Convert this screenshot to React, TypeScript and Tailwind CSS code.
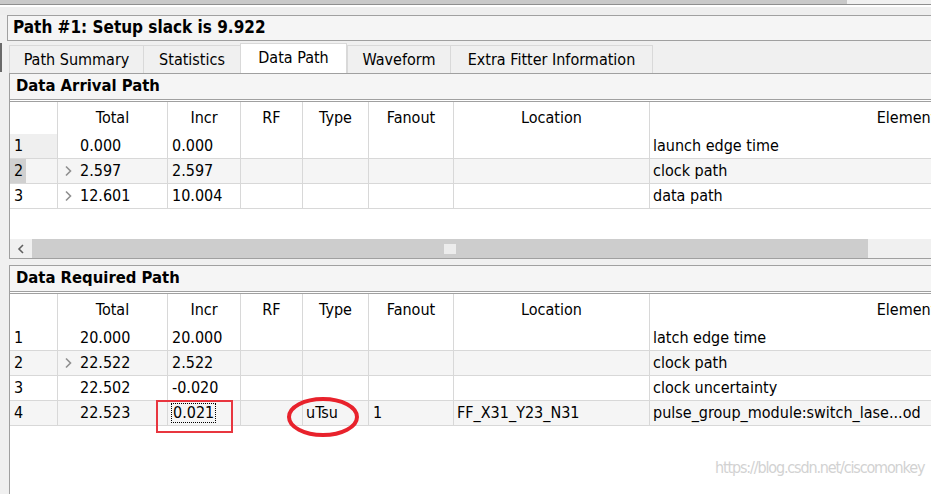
const FONT = '"DejaVu Sans Condensed", "DejaVu Sans", Tahoma, sans-serif';

type Row = {
  n: string;
  total: string;
  incr: string;
  type?: string;
  fanout?: string;
  location?: string;
  element: string;
  arrow?: boolean;
  focus?: boolean;
};

const arrival: Row[] = [
  { n: "1", total: "0.000", incr: "0.000", element: "launch edge time" },
  { n: "2", total: "2.597", incr: "2.597", element: "clock path", arrow: true },
  { n: "3", total: "12.601", incr: "10.004", element: "data path", arrow: true },
];

const required: Row[] = [
  { n: "1", total: "20.000", incr: "20.000", element: "latch edge time" },
  { n: "2", total: "22.522", incr: "2.522", element: "clock path", arrow: true },
  { n: "3", total: "22.502", incr: "-0.020", element: "clock uncertainty" },
  {
    n: "4",
    total: "22.523",
    incr: "0.021",
    type: "uTsu",
    fanout: "1",
    location: "FF_X31_Y23_N31",
    element: "pulse_group_module:switch_lase...od",
    focus: true,
  },
];

const cols = ["", "Total", "Incr", "RF", "Type", "Fanout", "Location", "Element"];

function Chevron() {
  return (
    <svg width="8" height="12" viewBox="0 0 8 12" className="mr-[8px] shrink-0">
      <polyline points="2,1.5 6.5,6 2,10.5" fill="none" stroke="#8f8f8f" strokeWidth="1.6" />
    </svg>
  );
}

function DataTable({ rows, selected }: { rows: Row[]; selected?: boolean }) {
  const grid = "grid grid-cols-[48px_110px_73px_62px_66px_85px_196px_514px]";
  return (
    <div className="bg-white">
      {/* header */}
      <div className={`${grid} h-[32px]`}>
        {cols.map((c, i) => (
          <div key={i} className="flex items-center justify-center whitespace-nowrap border-r border-[#d8d8d8]">
            {c}
          </div>
        ))}
      </div>
      {rows.map((r, i) => {
        const alt = i % 2 === 1 ? "bg-[#f5f5f5]" : "bg-white";
        const cell = "flex items-center border-r border-b border-[#d8d8d8] overflow-hidden whitespace-nowrap";
        return (
          <div key={r.n} className={`${grid} h-[25px] ${alt}`}>
            <div className={`${cell} ${selected && i === 0 ? "bg-[#efefef]" : ""} relative pl-[4px]`}>
              {selected && i === 1 && <div className="absolute left-0 top-0 h-full w-[16px] bg-[#d0d0d0]" />}
              <span className="relative">{r.n}</span>
            </div>
            <div className={`${cell} pl-[6px]`}>
              {r.arrow ? <Chevron /> : <span className="w-[16px] shrink-0" />}
              {r.total}
            </div>
            <div className={`${cell} pl-[3px]`}>
              {r.focus ? (
                <span className="border border-dotted border-black px-[1px] leading-[18px]">{r.incr}</span>
              ) : (
                <span className="pl-[1px]">{r.incr}</span>
              )}
            </div>
            <div className={cell} />
            <div className={`${cell} pl-[3px]`}>{r.type}</div>
            <div className={`${cell} pl-[4px]`}>{r.fanout}</div>
            <div className={`${cell} pl-[3px]`}>{r.location}</div>
            <div className={`${cell} pl-[3px]`}>{r.element}</div>
          </div>
        );
      })}
    </div>
  );
}

function SectionHeader({ title }: { title: string }) {
  return (
    <div className="flex h-[27px] items-center border-y border-[#a0a0a0] bg-[#f5f5f5] pl-[6px] text-[16.5px] font-bold">
      {title}
    </div>
  );
}

export default function App() {
  const tabs = [
    { label: "Path Summary", w: "w-[134px]" },
    { label: "Statistics", w: "w-[97px]" },
    { label: "Data Path", w: "w-[107px]", active: true },
    { label: "Waveform", w: "w-[103px]" },
    { label: "Extra Fitter Information", w: "w-[203px]" },
  ];

  return (
    <div
      className="relative h-[494px] w-[931px] overflow-hidden bg-[#f0f0f0] text-[16px] text-black"
      style={{ fontFamily: FONT }}
    >
      {/* window top strip */}
      <div className="flex h-[4px]">
        <div className="w-[847px] bg-[#c9c9c9]" />
        <div className="flex-1 bg-[#f0f0f0]" />
      </div>
      <div className="h-[1px] bg-[#8f8f8f]" />
      <div className="h-[2px] bg-white" />
      <div className="h-[8px] bg-[#eeeeee]" />

      {/* title */}
      <div className="ml-[7px] flex h-[26px] items-center border-y border-l border-[#a0a0a0] bg-[#f5f5f5] pl-[5px] text-[17px] font-bold">
        Path #1: Setup slack is 9.922
      </div>

      {/* left splitter mark */}
      <div className="absolute left-0 top-[43px] h-[29px] w-[2px] bg-[#6a6a6a]" />

      {/* tabs */}
      <div className="ml-[9px] mt-[2px] flex h-[30px] items-end">
        {tabs.map((t) =>
          t.active ? (
            <div
              key={t.label}
              className={`${t.w} flex h-[30px] items-center justify-center border-x border-t border-[#d9d9d9] bg-white pb-[2px]`}
            >
              {t.label}
            </div>
          ) : (
            <div
              key={t.label}
              className={`${t.w} flex h-[28px] items-center justify-center border-l border-t border-[#d9d9d9] bg-[#f0f0f0] pt-[1px] last:border-r`}
            >
              {t.label}
            </div>
          )
        )}
      </div>

      {/* arrival panel */}
      <div className="ml-[9px] border-l border-[#a0a0a0] bg-white">
        <SectionHeader title="Data Arrival Path" />
        <div className="h-[1px] bg-white" />
        <div className="border-t border-[#a0a0a0]">
          <DataTable rows={arrival} selected />
          <div className="h-[30px] bg-white" />
          {/* horizontal scrollbar */}
          <div className="flex h-[19px] items-center bg-[#f0f0f0]">
            <div className="flex w-[22px] items-center justify-center">
              <svg width="10" height="12" viewBox="0 0 10 12">
                <polyline points="7,2 3,6 7,10" fill="none" stroke="#606060" strokeWidth="1.6" />
              </svg>
            </div>
            <div className="flex h-full w-[836px] items-center bg-[#cdcdcd] pl-[412px]">
              <div className="h-[10px] w-[12px] bg-[#ececec]" />
            </div>
            <div className="flex-1" />
          </div>
        </div>
        <div className="h-[1px] bg-[#a0a0a0]" />
      </div>

      <div className="h-[6px]" />

      {/* required panel */}
      <div className="ml-[9px] h-[240px] border-l border-[#a0a0a0] bg-white">
        <SectionHeader title="Data Required Path" />
        <div className="h-[1px] bg-white" />
        <div className="border-t border-[#a0a0a0]">
          <DataTable rows={required} />
        </div>
      </div>

      {/* annotations */}
      <div className="absolute left-[156px] top-[400px] h-[33px] w-[77px] border-2 border-[#e8363f]" />
      <svg className="absolute left-[286px] top-[396px]" width="74" height="42" viewBox="0 0 74 42">
        <ellipse cx="37" cy="21" rx="34" ry="18" fill="none" stroke="#e8222c" strokeWidth="4" />
      </svg>

      {/* watermark */}
      <div
        className="absolute left-[715px] top-[456px] whitespace-nowrap text-[16px] tracking-[-1.15px] text-[#d2d2d2]"
        style={{ fontFamily: '"DejaVu Sans Condensed", sans-serif' }}
      >
        https://blog.csdn.net/ciscomonkey
      </div>
    </div>
  );
}
